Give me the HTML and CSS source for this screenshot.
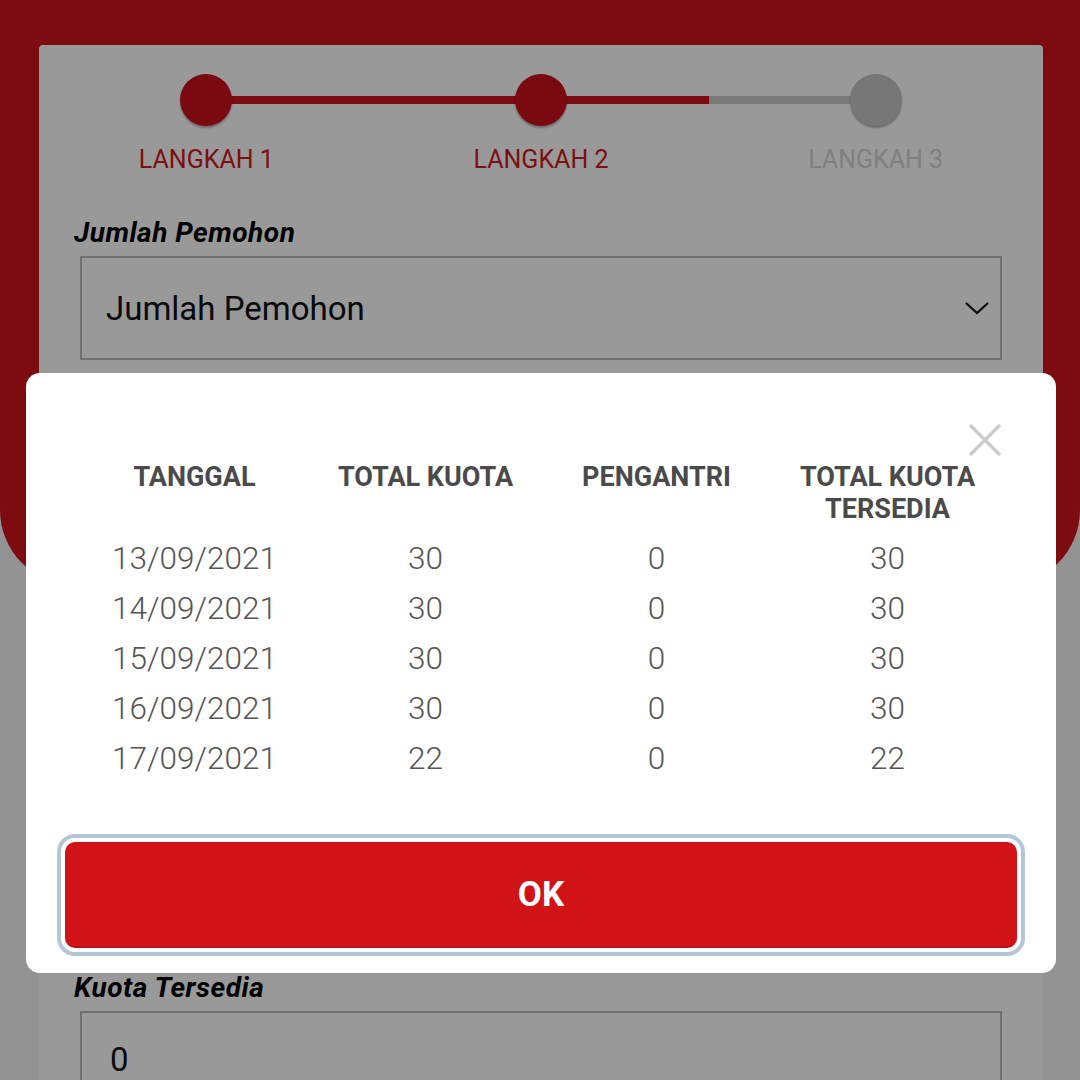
FILE: index.html
```html
<!DOCTYPE html>
<html lang="id">
<head>
<meta charset="utf-8">
<title>Kuota</title>
<link rel="stylesheet" href="styles.css">
</head>
<body>
<div class="page">
  <div class="hero"></div>
  <main class="card">
    <div class="stepper">
      <div class="track"><div class="track-fill"></div></div>
      <div class="step done"><span class="dot"></span><span class="step-label">LANGKAH 1</span></div>
      <div class="step done"><span class="dot"></span><span class="step-label">LANGKAH 2</span></div>
      <div class="step"><span class="dot"></span><span class="step-label">LANGKAH 3</span></div>
    </div>
    <div class="form">
      <label class="field-label">Jumlah Pemohon</label>
      <div class="select">
        <span>Jumlah Pemohon</span>
        <svg class="chev" width="26" height="16" viewBox="0 0 26 16"><path d="M2 3 L13 13 L24 3" fill="none" stroke="#111" stroke-width="2.2"/></svg>
      </div>
      <label class="field-label kuota">Kuota Tersedia</label>
      <div class="input"><span>0</span></div>
    </div>
  </main>
</div>

<div class="overlay">
  <div class="modal">
    <button class="close" aria-label="close">
      <svg width="34" height="34" viewBox="0 0 34 34"><path d="M2 2 L32 32 M32 2 L2 32" stroke="#cccccc" stroke-width="3.2" fill="none"/></svg>
    </button>
    <table class="quota">
      <thead>
        <tr><th>TANGGAL</th><th>TOTAL KUOTA</th><th>PENGANTRI</th><th>TOTAL KUOTA TERSEDIA</th></tr>
      </thead>
      <tbody>
        <tr><td>13/09/2021</td><td>30</td><td>0</td><td>30</td></tr>
        <tr><td>14/09/2021</td><td>30</td><td>0</td><td>30</td></tr>
        <tr><td>15/09/2021</td><td>30</td><td>0</td><td>30</td></tr>
        <tr><td>16/09/2021</td><td>30</td><td>0</td><td>30</td></tr>
        <tr><td>17/09/2021</td><td>22</td><td>0</td><td>22</td></tr>
      </tbody>
    </table>
    <button class="ok">OK</button>
  </div>
</div>
</body>
</html>
```
FILE: styles.css
```css
* { box-sizing: border-box; }
html, body { margin: 0; padding: 0; }
body {
  width: 1080px;
  height: 1080px;
  overflow: hidden;
  background: #f5f5f5;
  font-family: Roboto, "Noto Sans", "Liberation Sans", sans-serif;
}
.page {
  position: relative;
  height: 1080px;
  overflow: hidden;
  padding-top: 45px;
}
.hero {
  position: absolute;
  left: 0; top: 0;
  width: 1080px;
  height: 585px;
  background: #cf141b;
  border-radius: 0 0 75px 75px;
}
.card {
  position: relative;
  margin: 0 37px 0 39px;
  background: #fff;
  border-radius: 4px;
  min-height: 1100px;
  padding-top: 29px;
}
.stepper {
  position: relative;
  display: grid;
  grid-template-columns: repeat(3, 1fr);
}
.track {
  position: absolute;
  left: 167px;
  right: 167px;
  top: 22px;
  height: 8px;
  background: #cbcbcb;
}
.track-fill {
  width: 75%;
  height: 100%;
  background: #cf141b;
}
.step {
  position: relative;
  display: flex;
  flex-direction: column;
  align-items: center;
}
.dot {
  width: 52px;
  height: 52px;
  border-radius: 50%;
  background: #c6c6c6;
  box-shadow: 0 2px 2px rgba(0,0,0,0.3);
}
.step.done .dot { background: #cc1219; }
.step-label {
  margin-top: 19px;
  font-size: 25px;
  line-height: 30px;
  color: #d5d5d5;
}
.step.done .step-label { color: #cf1a22; }
.form {
  padding: 42px 35px 0;
}
.field-label {
  display: block;
  font-size: 28px;
  line-height: 32px;
  font-weight: 700;
  font-style: italic;
  letter-spacing: 0.5px;
  color: #000;
}
.select, .input {
  margin: 7px 6px 0;
  height: 104px;
  border: 2px solid #b9b9b9;
  display: flex;
  align-items: center;
  justify-content: space-between;
  padding: 0 10px 0 24px;
  font-size: 33px;
  color: #111;
}
.input { padding-left: 28px; padding-bottom: 8px; }
.field-label.kuota { margin-top: 612px; }

.overlay {
  position: fixed;
  inset: 0;
  background: rgba(0,0,0,0.4);
  display: flex;
  align-items: flex-start;
  padding: 373px 0 0 26px;
}
.modal {
  position: relative;
  width: 1030px;
  background: #fff;
  border-radius: 14px;
  padding: 88px 39px 25px;
}
.close {
  position: absolute;
  top: 50px;
  right: 54px;
  width: 34px;
  height: 34px;
  padding: 0;
  border: 0;
  background: none;
}
.close svg { display: block; }
.quota {
  width: 924px;
  margin: 0 14px;
  border-collapse: collapse;
  table-layout: fixed;
}
.quota th {
  width: 25%;
  font-size: 27px;
  line-height: 32px;
  font-weight: 700;
  color: #4a4a4a;
  text-align: center;
  vertical-align: top;
  padding: 0 8px 8px;
}
.quota td {
  height: 50px;
  padding: 0;
  font-size: 31.5px;
  font-weight: 300;
  color: #555;
  text-align: center;
  vertical-align: middle;
}
.ok {
  display: block;
  width: 952px;
  height: 106px;
  margin-top: 59px;
  border: 0;
  border-bottom: 2px solid #b71015;
  border-radius: 10px;
  background: #d11317;
  color: #fff;
  font-family: Roboto, "Noto Sans", "Liberation Sans", sans-serif;
  font-size: 35px;
  font-weight: 700;
  box-shadow: 0 0 0 4px #fff, 0 0 0 8px #b3c6d8;
}
```
